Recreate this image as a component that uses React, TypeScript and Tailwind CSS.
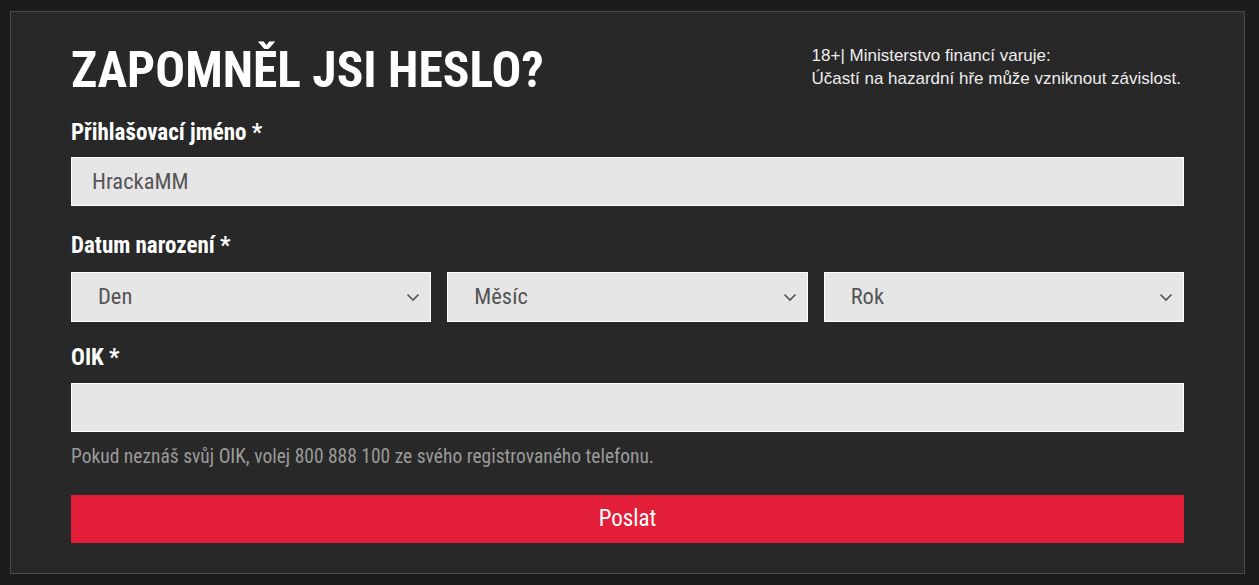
import React from "react";

function Chevron() {
  return (
    <svg width="14" height="9" viewBox="0 0 14 9" fill="none" className="shrink-0">
      <path d="M1.5 1.5 L7 7 L12.5 1.5" stroke="#555" strokeWidth="1.6" />
    </svg>
  );
}

function Select({ label }: { label: string }) {
  return (
    <div className="flex h-[50px] flex-1 items-center justify-between border border-white bg-[#e6e6e6] pl-[26px] pr-[10px]">
      <span className="font-['Roboto',sans-serif] text-[22.5px] text-[#555] font-stretch-condensed">{label}</span>
      <Chevron />
    </div>
  );
}

function Label({ children, className }: { children: React.ReactNode; className: string }) {
  return (
    <div className={"font-['Roboto',sans-serif] text-[23px] font-bold leading-[26px] text-white font-stretch-condensed " + className}>
      {children}
    </div>
  );
}

export default function App() {
  return (
    <div className="min-h-[585px] bg-[#1c1c1c] pl-[10px] pt-[11px]">
      <div className="h-[563px] w-[1235px] border border-[#4a4a4a] bg-[#282828] px-[60px]">
        <div className="flex items-start justify-between pt-[28px]">
          <h1 className="font-['Roboto',sans-serif] text-[49.5px] font-bold leading-[60px] text-white font-stretch-condensed">
            ZAPOMNĚL JSI HESLO?
          </h1>
          <div className="mr-[3px] mt-[4px] font-['Liberation_Sans',Arial,sans-serif] text-[17px] leading-[23px] text-[#eeeeee]">
            <div>18+| Ministerstvo financí varuje:</div>
            <div>Účastí na hazardní hře může vzniknout závislost.</div>
          </div>
        </div>
        <Label className="mt-[20px]">Přihlašovací jméno *</Label>
        <div className="mt-[11px] flex h-[49px] items-center border border-white bg-[#e6e6e6] pl-[20px]">
          <span className="font-['Roboto',sans-serif] text-[22.5px] text-[#555] font-stretch-condensed">HrackaMM</span>
        </div>
        <Label className="mt-[27px]">Datum narození *</Label>
        <div className="mt-[13px] flex gap-[16px]">
          <Select label="Den" />
          <Select label="Měsíc" />
          <Select label="Rok" />
        </div>
        <Label className="mt-[23px]">OIK *</Label>
        <div className="mt-[12px] h-[49px] border border-white bg-[#e6e6e6]" />
        <div className="mt-[14px] font-['Roboto',sans-serif] text-[19.5px] leading-[22px] text-[#9a9a9a] font-stretch-condensed">
          Pokud neznáš svůj OIK, volej 800 888 100 ze svého registrovaného telefonu.
        </div>
        <button className="mt-[27px] flex h-[48px] w-full items-center justify-center bg-[#e31e39] font-['Roboto',sans-serif] text-[23px] text-white font-stretch-condensed">
          Poslat
        </button>
      </div>
    </div>
  );
}
